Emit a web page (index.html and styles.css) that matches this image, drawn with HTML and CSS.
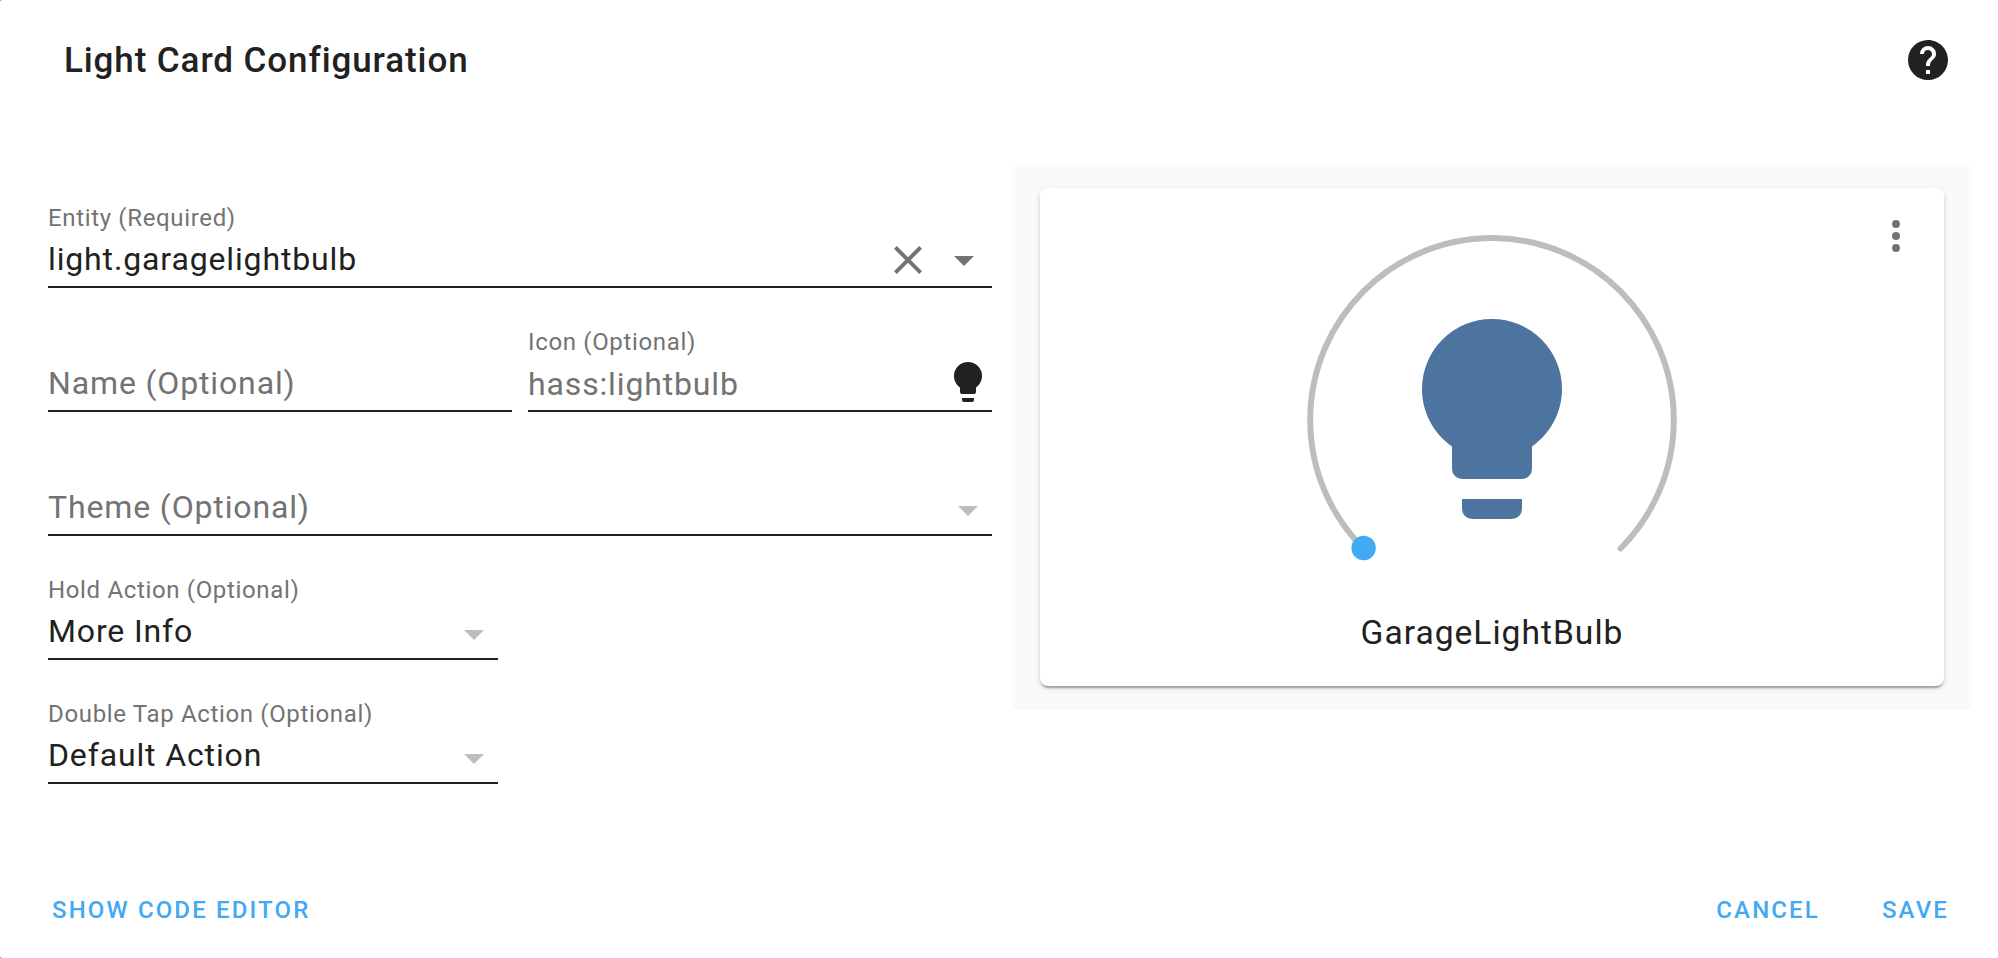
FILE: index.html
```html
<!DOCTYPE html>
<html lang="en">
<head>
<meta charset="utf-8">
<title>Light Card Configuration</title>
<link rel="stylesheet" href="styles.css">
</head>
<body>
<main class="dialog">
  <header class="header">
    <h1 class="title">Light Card Configuration</h1>
    <svg class="icon help" viewBox="0 0 24 24"><path d="M15.07,11.25L14.17,12.17C13.45,12.89 13,13.5 13,15H11V14.5C11,13.39 11.45,12.39 12.17,11.67L13.41,10.41C13.78,10.05 14,9.55 14,9C14,7.89 13.1,7 12,7A2,2 0 0,0 10,9H8A4,4 0 0,1 12,5A4,4 0 0,1 16,9C16,9.88 15.64,10.67 15.07,11.25M13,19H11V17H13M12,2A10,10 0 0,0 2,12A10,10 0 0,0 12,22A10,10 0 0,0 22,12C22,6.47 17.5,2 12,2Z"/></svg>
  </header>
  <div class="content">
    <form class="form">
      <div class="field">
        <div class="label">Entity (Required)</div>
        <div class="control"><span class="value entity">light.garagelightbulb</span>
          <svg class="icon muted clear" viewBox="0 0 24 24"><path d="M19,6.41L17.59,5L12,10.59L6.41,5L5,6.41L10.59,12L5,17.59L6.41,19L12,13.41L17.59,19L19,17.59L13.41,12L19,6.41Z"/></svg>
          <svg class="icon muted toggle" viewBox="0 0 24 24"><path d="M7,10L12,15L17,10H7Z"/></svg>
        </div>
      </div>
      <div class="pair">
        <div class="field">
          <div class="label"></div>
          <div class="control"><span class="placeholder">Name (Optional)</span></div>
        </div>
        <div class="field">
          <div class="label">Icon (Optional)</div>
          <div class="control"><span class="placeholder hint">hass:lightbulb</span>
            <svg class="icon bulb-small" viewBox="0 0 24 24"><path d="M12,2A7,7 0 0,0 5,9C5,11.38 6.19,13.47 8,14.74V17A1,1 0 0,0 9,18H15A1,1 0 0,0 16,17V14.74C17.81,13.47 19,11.38 19,9A7,7 0 0,0 12,2M9,21A1,1 0 0,0 10,22H14A1,1 0 0,0 15,21V20H9V21Z"/></svg>
          </div>
        </div>
      </div>
      <div class="field">
        <div class="label"></div>
        <div class="control"><span class="placeholder">Theme (Optional)</span>
          <svg class="icon faint" viewBox="0 0 24 24"><path d="M7,10L12,15L17,10H7Z"/></svg>
        </div>
      </div>
      <div class="field short">
        <div class="label">Hold Action (Optional)</div>
        <div class="control"><span class="value">More Info</span>
          <svg class="icon faint" viewBox="0 0 24 24"><path d="M7,10L12,15L17,10H7Z"/></svg>
        </div>
      </div>
      <div class="field short">
        <div class="label">Double Tap Action (Optional)</div>
        <div class="control"><span class="value">Default Action</span>
          <svg class="icon faint" viewBox="0 0 24 24"><path d="M7,10L12,15L17,10H7Z"/></svg>
        </div>
      </div>
    </form>
    <section class="preview">
      <div class="card">
        <svg class="icon muted more" viewBox="0 0 24 24"><path d="M12,16A2,2 0 0,1 14,18A2,2 0 0,1 12,20A2,2 0 0,1 10,18A2,2 0 0,1 12,16M12,10A2,2 0 0,1 14,12A2,2 0 0,1 12,14A2,2 0 0,1 10,12A2,2 0 0,1 12,10M12,4A2,2 0 0,1 14,6A2,2 0 0,1 12,8A2,2 0 0,1 10,6A2,2 0 0,1 12,4Z"/></svg>
        <svg class="dial" viewBox="-200 -200 400 360">
          <path class="track" d="M-128.5 128.5A181.8 181.8 0 1 1 128.5 128.5"/>
          <circle class="handle" cx="-128.4" cy="128" r="12.2"/>
          <path class="bulb" transform="translate(-120 -121) scale(10)" d="M12,2A7,7 0 0,0 5,9C5,11.38 6.19,13.47 8,14.74V17A1,1 0 0,0 9,18H15A1,1 0 0,0 16,17V14.74C17.81,13.47 19,11.38 19,9A7,7 0 0,0 12,2M9,21A1,1 0 0,0 10,22H14A1,1 0 0,0 15,21V20H9V21Z"/>
        </svg>
        <div class="name">GarageLightBulb</div>
      </div>
    </section>
  </div>
  <footer class="actions">
    <button class="button">SHOW CODE EDITOR</button>
    <div class="confirm">
      <button class="button">CANCEL</button>
      <button class="button">SAVE</button>
    </div>
  </footer>
</main>
</body>
</html>
```
FILE: styles.css
```css
* {
  box-sizing: border-box;
}

body {
  margin: 0;
  background: #808080;
  font-family: Roboto, "Liberation Sans", sans-serif;
  color: #212121;
}

.dialog {
  display: flex;
  flex-direction: column;
  height: 958px;
  background: #fff;
  border-radius: 2px 0 0 2px;
  overflow: hidden;
}

.header {
  display: flex;
  justify-content: space-between;
  align-items: center;
  height: 120px;
  padding: 0 46px 0 64px;
}

.title {
  margin: 0;
  padding-top: 2px;
  font-size: 35px;
  font-weight: 500;
  line-height: 64px;
  letter-spacing: 0.9px;
}

.icon {
  flex: none;
  width: 48px;
  height: 48px;
  fill: #212121;
}

.muted {
  fill: #737373;
}

.faint {
  fill: #bdbdbd;
}

.content {
  display: flex;
  align-items: flex-start;
  gap: 20px;
  height: 700px;
  padding: 44px 26px 0 48px;
}

.form {
  width: 944px;
  padding-top: 18px;
}

.field {
  flex: 1;
  height: 124px;
  padding-top: 16px;
}

.short {
  width: 450px;
}

.pair {
  display: flex;
  gap: 16px;
}

.label {
  height: 40px;
  font-size: 24px;
  line-height: 40px;
  letter-spacing: 0.656px;
  color: #737373;
}

.control {
  display: flex;
  height: 50px;
  border-bottom: 2px solid #212121;
  font-size: 32px;
  line-height: 42px;
  letter-spacing: 0.86px;
}

.value,
.placeholder {
  flex: 1;
  white-space: nowrap;
}

.placeholder {
  color: #737373;
}

.hint {
  padding-top: 1px;
}

.clear {
  margin: -2px 8px 0 0;
}

.toggle {
  margin: -2px 4px 0 0;
}

.bulb-small {
  margin-top: -4px;
}

.preview {
  width: 960px;
  height: 546px;
  padding: 24px 28px;
  background: #fafafa;
  border-radius: 8px;
}

.card {
  position: relative;
  display: flex;
  flex-direction: column;
  align-items: center;
  height: 498px;
  padding-top: 32px;
  background: #fff;
  border-radius: 8px;
  box-shadow: 0 4px 2px -2px rgba(0, 0, 0, 0.2), 0 2px 2px 0 rgba(0, 0, 0, 0.14), 0 2px 6px 0 rgba(0, 0, 0, 0.12);
}

.more {
  position: absolute;
  top: 24px;
  right: 24px;
}

.dial {
  flex: none;
  width: 400px;
  height: 360px;
}

.track {
  fill: none;
  stroke: #bdbdbd;
  stroke-width: 6;
  stroke-linecap: round;
}

.handle {
  fill: #42a9f2;
}

.bulb {
  fill: #4d749e;
}

.name {
  margin-top: 33px;
  font-size: 33.6px;
  line-height: 40px;
  letter-spacing: 1px;
}

.actions {
  display: flex;
  justify-content: space-between;
  align-items: center;
  height: 72px;
  margin-top: 54px;
  padding: 0 49px 0 52px;
}

.confirm {
  display: flex;
  gap: 62px;
}

.button {
  padding: 0;
  border: 0;
  background: none;
  font: 500 24px/36px Roboto, "Liberation Sans", sans-serif;
  letter-spacing: 2.14px;
  color: #42a9f2;
}
```
